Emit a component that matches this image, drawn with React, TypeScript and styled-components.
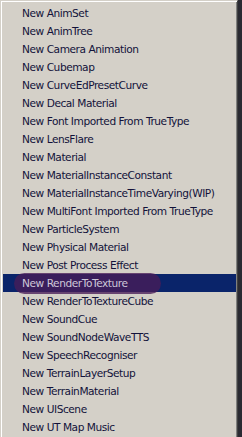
import styled, { createGlobalStyle } from 'styled-components'

const items = [
  'New AnimSet',
  'New AnimTree',
  'New Camera Animation',
  'New Cubemap',
  'New CurveEdPresetCurve',
  'New Decal Material',
  'New Font Imported From TrueType',
  'New LensFlare',
  'New Material',
  'New MaterialInstanceConstant',
  'New MaterialInstanceTimeVarying(WIP)',
  'New MultiFont Imported From TrueType',
  'New ParticleSystem',
  'New Physical Material',
  'New Post Process Effect',
  'New RenderToTexture',
  'New RenderToTextureCube',
  'New SoundCue',
  'New SoundNodeWaveTTS',
  'New SpeechRecogniser',
  'New TerrainLayerSetup',
  'New TerrainMaterial',
  'New UIScene',
  'New UT Map Music',
]

const Global = createGlobalStyle`
  html, body {
    margin: 0;
    padding: 0;
    background: #2a2a32;
    overflow: hidden;
  }
`

const Page = styled.div`
  display: flex;
  width: 242px;
  height: 437px;
  overflow: hidden;
`

const Menu = styled.div`
  width: 238px;
  height: 437px;
  box-sizing: border-box;
  background: #d4d0c8;
  border-top: 1px solid #d4d0c8;
  border-left: 1px solid #d4d0c8;
  border-right: 1px solid #404040;
  box-shadow: inset 1px 1px 0 #ffffff, inset -1px 0 0 #808080;
  padding: 3px 1px 0 2px;
  overflow: hidden;
`

const Item = styled.div<{ $active?: boolean }>`
  position: relative;
  height: 18px;
  line-height: 18px;
  padding-left: 19px;
  font-family: 'DejaVu Sans', 'Liberation Sans', sans-serif;
  font-size: 10.6px;
  letter-spacing: -0.45px;
  white-space: nowrap;
  color: ${(p) => (p.$active ? '#cdc6d8' : '#12123a')};
  background: ${(p) => (p.$active ? '#0a246a' : 'transparent')};
`

const Label = styled.span`
  position: relative;
  z-index: 1;
`

const Scribble = styled.div`
  position: absolute;
  left: 11px;
  top: -1px;
  width: 147px;
  height: 21px;
  border-radius: 11px;
  background: rgba(72, 28, 88, 0.78);
`

export default function App() {
  return (
    <Page>
      <Global />
      <Menu>
        {items.map((text) => {
          const active = text === 'New RenderToTexture'
          return (
            <Item key={text} $active={active}>
              {active && <Scribble />}
              <Label>{text}</Label>
            </Item>
          )
        })}
      </Menu>
    </Page>
  )
}
